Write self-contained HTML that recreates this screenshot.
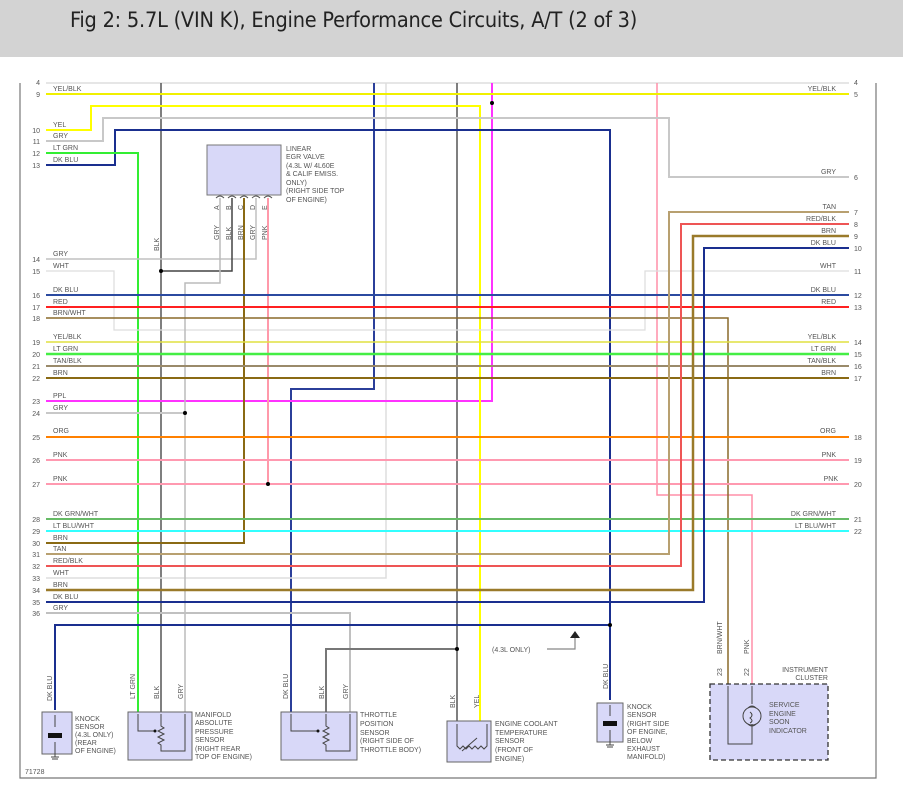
<!DOCTYPE html>
<html><head><meta charset="utf-8">
<style>
html,body{margin:0;padding:0;background:#fff;width:903px;height:792px;overflow:hidden}
.hdr{position:absolute;left:0;top:0;width:903px;height:57px;background:#d3d3d3}
.hdr span{position:absolute;left:70px;top:8px;font-family:"DejaVu Sans Condensed","Liberation Sans Narrow","Liberation Sans",sans-serif;font-size:21.5px;color:#222;letter-spacing:-0.2px}
svg{position:absolute;left:0;top:0}
text{font-family:"Liberation Sans",Arial,sans-serif;font-size:7px;fill:#555}
</style></head><body>
<div class="hdr"><span>Fig 2: 5.7L (VIN K), Engine Performance Circuits, A/T (2 of 3)</span></div>
<svg width="903" height="792" viewBox="0 0 903 792" fill="none">
<path d="M20 83V778H876V83" stroke="#777" stroke-width="1.2"/>
<path d="M46 83H849" stroke="#ccc" stroke-width="1"/>
<g stroke-width="2" fill="none">
<path d="M161 83V712" stroke="#555" stroke-width="1.5"/>
<path d="M374 83V389H291V712" stroke="#2b3f9a"/>
<path d="M386 83V578H46" stroke="#ddd" stroke-width="1.5"/>
<path d="M457 83V721" stroke="#555" stroke-width="1.5"/>
<path d="M492 83V401H46" stroke="#ff33ff"/>
<path d="M657 83V495H752V684" stroke="#ff8fa8" stroke-width="1.5"/>
<path d="M46 94H849" stroke="#f0f000"/>
<path d="M46 130H91V106H480V721" stroke="#ffff00"/>
<path d="M46 141H103V118H669V177H849" stroke="#c8c8c8"/>
<path d="M46 165H115V130H610V700" stroke="#1a2f8f"/>
<path d="M46 153H138V712" stroke="#33ee33"/>
<path d="M46 259H256V198" stroke="#c0c0c0" stroke-width="1.5"/>
<path d="M46 271H114V330H645V271H849" stroke="#ddd" stroke-width="1.2"/>
<path d="M161 271H232V198" stroke="#444" stroke-width="1.5"/>
<path d="M220 198V283H185V712" stroke="#bbb" stroke-width="1.5"/>
<path d="M244 198V543H46" stroke="#8a6a14"/>
<path d="M268 198V484" stroke="#ff99aa"/>
<path d="M46 295H849" stroke="#2b4aa0"/>
<path d="M46 307H849" stroke="#ff2020"/>
<path d="M46 318H728V684" stroke="#8a6a2a" stroke-width="1.5"/>
<path d="M46 342H849" stroke="#e0e040" stroke-width="1.5"/>
<path d="M46 354H849" stroke="#44ee44" stroke-width="2.5"/>
<path d="M46 366H849" stroke="#9a8a6a"/>
<path d="M46 378H849" stroke="#8a6a14"/>
<path d="M46 413H185" stroke="#c8c8c8"/>
<path d="M46 437H849" stroke="#ff8000"/>
<path d="M46 460H849" stroke="#ff99b0"/>
<path d="M46 484H849" stroke="#ff99b0"/>
<path d="M46 519H849" stroke="#66bb66"/>
<path d="M46 531H849" stroke="#33ffff"/>
<path d="M849 212H669V554H46" stroke="#b8a070"/>
<path d="M849 224H681V566H46" stroke="#ee5555"/>
<path d="M849 236H693V590H46" stroke="#9a7a2a" stroke-width="2.5"/>
<path d="M849 248H704V602H46" stroke="#1a2f8f"/>
<path d="M46 613H350V712" stroke="#c0c0c0"/>
<path d="M55 710V625H610" stroke="#1a2f8f"/>
<path d="M326 712V649H457" stroke="#777"/>
<path d="M547 649H575V638" stroke="#888" stroke-width="1.2"/>
</g>
<path d="M570 638L575 631L580 638Z" fill="#222"/>
<g fill="#000">
<circle cx="161" cy="271" r="2"/><circle cx="185" cy="413" r="2"/><circle cx="268" cy="484" r="2"/>
<circle cx="492" cy="103" r="2"/><circle cx="457" cy="649" r="2"/><circle cx="610" cy="625" r="2"/>
</g>
<rect x="207" y="145" width="74" height="50" fill="#d8d8f8" stroke="#777"/>
<g stroke="#555" stroke-width="1" fill="none">
<path d="M216 198q4-4 8 0M228 198q4-4 8 0M240 198q4-4 8 0M252 198q4-4 8 0M264 198q4-4 8 0"/>
</g>
<text x="286" y="151">LINEAR</text><text x="286" y="159">EGR VALVE</text><text x="286" y="168">(4.3L W/ 4L60E</text>
<text x="286" y="176">&amp; CALIF EMISS.</text><text x="286" y="185">ONLY)</text><text x="286" y="193">(RIGHT SIDE TOP</text><text x="286" y="202">OF ENGINE)</text>
<g transform="rotate(-90)">
<text x="-210" y="219">A</text><text x="-210" y="231">B</text><text x="-210" y="243">C</text><text x="-210" y="255">D</text><text x="-210" y="267">E</text>
<text x="-240" y="219">GRY</text><text x="-240" y="231">BLK</text><text x="-240" y="243">BRN</text><text x="-240" y="255">GRY</text><text x="-240" y="267">PNK</text>
<text x="-251" y="159">BLK</text>
<text x="-701" y="52">DK BLU</text><text x="-699" y="135">LT GRN</text><text x="-699" y="159">BLK</text><text x="-699" y="183">GRY</text>
<text x="-699" y="288">DK BLU</text><text x="-699" y="324">BLK</text><text x="-699" y="348">GRY</text>
<text x="-708" y="455">BLK</text><text x="-708" y="479">YEL</text><text x="-689" y="608">DK BLU</text>
<text x="-654" y="722">BRN/WHT</text><text x="-654" y="749">PNK</text>
<text x="-676" y="722">23</text><text x="-676" y="749">22</text>
</g>
<g>
<text x="53" y="91">YEL/BLK</text><text x="53" y="127">YEL</text><text x="53" y="138">GRY</text><text x="53" y="150">LT GRN</text><text x="53" y="162">DK BLU</text>
<text x="53" y="256">GRY</text><text x="53" y="268">WHT</text><text x="53" y="292">DK BLU</text><text x="53" y="304">RED</text><text x="53" y="315">BRN/WHT</text>
<text x="53" y="339">YEL/BLK</text><text x="53" y="351">LT GRN</text><text x="53" y="363">TAN/BLK</text><text x="53" y="375">BRN</text>
<text x="53" y="398">PPL</text><text x="53" y="410">GRY</text><text x="53" y="433">ORG</text><text x="53" y="457">PNK</text><text x="53" y="481">PNK</text>
<text x="53" y="516">DK GRN/WHT</text><text x="53" y="528">LT BLU/WHT</text><text x="53" y="540">BRN</text><text x="53" y="551">TAN</text>
<text x="53" y="563">RED/BLK</text><text x="53" y="575">WHT</text><text x="53" y="587">BRN</text><text x="53" y="599">DK BLU</text><text x="53" y="610">GRY</text>
</g>
<g text-anchor="end">
<text x="40" y="85">4</text><text x="40" y="97">9</text><text x="40" y="133">10</text><text x="40" y="144">11</text><text x="40" y="156">12</text><text x="40" y="168">13</text>
<text x="40" y="262">14</text><text x="40" y="274">15</text><text x="40" y="298">16</text><text x="40" y="310">17</text><text x="40" y="321">18</text>
<text x="40" y="345">19</text><text x="40" y="357">20</text><text x="40" y="369">21</text><text x="40" y="381">22</text>
<text x="40" y="404">23</text><text x="40" y="416">24</text><text x="40" y="440">25</text><text x="40" y="463">26</text><text x="40" y="487">27</text>
<text x="40" y="522">28</text><text x="40" y="534">29</text><text x="40" y="546">30</text><text x="40" y="557">31</text><text x="40" y="569">32</text>
<text x="40" y="581">33</text><text x="40" y="593">34</text><text x="40" y="605">35</text><text x="40" y="616">36</text>
<text x="836" y="91">YEL/BLK</text><text x="836" y="174">GRY</text><text x="836" y="209">TAN</text><text x="836" y="221">RED/BLK</text><text x="836" y="233">BRN</text>
<text x="836" y="245">DK BLU</text><text x="836" y="268">WHT</text><text x="836" y="292">DK BLU</text><text x="836" y="304">RED</text>
<text x="836" y="339">YEL/BLK</text><text x="836" y="351">LT GRN</text><text x="836" y="363">TAN/BLK</text><text x="836" y="375">BRN</text>
<text x="836" y="433">ORG</text><text x="836" y="457">PNK</text><text x="838" y="481">PNK</text><text x="836" y="516">DK GRN/WHT</text><text x="836" y="528">LT BLU/WHT</text>
<text x="828" y="672">INSTRUMENT</text><text x="828" y="680">CLUSTER</text>
</g>
<g>
<text x="854" y="85">4</text><text x="854" y="97">5</text><text x="854" y="180">6</text><text x="854" y="215">7</text><text x="854" y="227">8</text><text x="854" y="239">9</text>
<text x="854" y="251">10</text><text x="854" y="274">11</text><text x="854" y="298">12</text><text x="854" y="310">13</text>
<text x="854" y="345">14</text><text x="854" y="357">15</text><text x="854" y="369">16</text><text x="854" y="381">17</text>
<text x="854" y="440">18</text><text x="854" y="463">19</text><text x="854" y="487">20</text><text x="854" y="522">21</text><text x="854" y="534">22</text>
<text x="492" y="652">(4.3L ONLY)</text>
<text x="25" y="774">71728</text>
</g>
<g stroke="#666" stroke-width="1">
<rect x="42" y="712" width="30" height="42" fill="#d8d8f8"/>
<rect x="128" y="712" width="64" height="48" fill="#d8d8f8"/>
<rect x="281" y="712" width="76" height="48" fill="#d8d8f8"/>
<rect x="447" y="721" width="44" height="41" fill="#d8d8f8"/>
<rect x="597" y="703" width="26" height="39" fill="#d8d8f8"/>
<rect x="710" y="684" width="118" height="76" fill="#d8d8f8" stroke="#333" stroke-dasharray="5,3" stroke-width="1.3"/>
</g>
<g stroke="#444" stroke-width="1" fill="none">
<path d="M55 715V727M55 742V754V757M51 757H59M52 759H58"/>
<path d="M610 705V716M610 730V742V745M606 745H614M607 747H613"/>
<path d="M138 714V731H155M161 714V726l3 2-6 3 6 3-6 3 6 3-6 3 3 2V751H185V714"/>
<path d="M291 714V731H318M326 714V726l3 2-6 3 6 3-6 3 6 3-6 3 3 2V751H350V714"/>
<path d="M457 724V746l3 3 3-3 3 3 3-3 3 3 3-3 3 3 3-3 3 3 3-3V724M462 751L477 738"/>
<path d="M728 686V744H752V731M752 686V704M752 724V731"/>
<circle cx="752" cy="716" r="9"/>
<path d="M748 708q4-4 8 0M748 724q4 4 8 0M750 712q4 3 0 6q4 3 0 5"/>
</g>
<g fill="#111"><rect x="48" y="733" width="14" height="5"/><rect x="603" y="721" width="14" height="5"/>
<circle cx="155" cy="731" r="1.5"/><circle cx="318" cy="731" r="1.5"/></g>
<text x="75" y="721">KNOCK</text><text x="75" y="729">SENSOR</text><text x="75" y="737">(4.3L ONLY)</text><text x="75" y="745">(REAR</text><text x="75" y="753">OF ENGINE)</text>
<text x="195" y="717">MANIFOLD</text><text x="195" y="725">ABSOLUTE</text><text x="195" y="734">PRESSURE</text><text x="195" y="742">SENSOR</text><text x="195" y="751">(RIGHT REAR</text><text x="195" y="759">TOP OF ENGINE)</text>
<text x="360" y="717">THROTTLE</text><text x="360" y="726">POSITION</text><text x="360" y="735">SENSOR</text><text x="360" y="743">(RIGHT SIDE OF</text><text x="360" y="752">THROTTLE BODY)</text>
<text x="495" y="726">ENGINE COOLANT</text><text x="495" y="735">TEMPERATURE</text><text x="495" y="743">SENSOR</text><text x="495" y="752">(FRONT OF</text><text x="495" y="761">ENGINE)</text>
<text x="627" y="709">KNOCK</text><text x="627" y="717">SENSOR</text><text x="627" y="726">(RIGHT SIDE</text><text x="627" y="734">OF ENGINE,</text><text x="627" y="743">BELOW</text><text x="627" y="751">EXHAUST</text><text x="627" y="759">MANIFOLD)</text>
<text x="769" y="707">SERVICE</text><text x="769" y="716">ENGINE</text><text x="769" y="724">SOON</text><text x="769" y="733">INDICATOR</text>
</svg>
</body></html>
